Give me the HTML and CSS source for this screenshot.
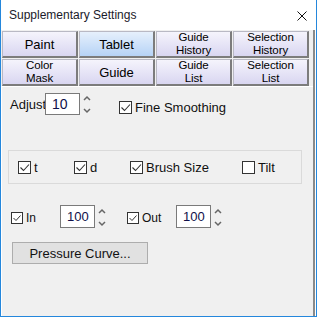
FILE: index.html
```html
<!DOCTYPE html>
<html lang="en">
<head>
    <meta charset="UTF-8">
    <title>Supplementary Settings</title>
    <link rel="stylesheet" href="styles.css">
</head>
<body>
    <div class="window">
        <div class="titlebar">
            <span class="title">Supplementary Settings</span>
            <svg class="close" width="10" height="10" viewBox="0 0 10 10">
                <path d="M0.5 0.5 L9.5 9.5 M9.5 0.5 L0.5 9.5" stroke="#111" stroke-width="1" fill="none"/>
            </svg>
        </div>
        <div class="frame">
            <div class="tabs">
                <div class="tab">Paint</div>
                <div class="tab active">Tablet</div>
                <div class="tab small"><span>Guide</span><span>History</span></div>
                <div class="tab small"><span>Selection</span><span>History</span></div>
                <div class="tab small"><span>Color</span><span>Mask</span></div>
                <div class="tab">Guide</div>
                <div class="tab small"><span>Guide</span><span>List</span></div>
                <div class="tab small"><span>Selection</span><span>List</span></div>
            </div>
            <div class="panel">
                <div class="row adjust-row">
                    <span class="label adjust">Adjust</span>
                    <div class="field">10</div>
                    <svg class="spin" width="8" height="22" viewBox="0 0 8 22">
                        <path d="M1 7 L4 4 L7 7 M1 16 L4 19 L7 16" stroke="#666" stroke-width="1.5" fill="none"/>
                    </svg>
                    <label class="check fine">
                        <span class="box">
                            <svg width="11" height="11" viewBox="0 0 11 11"><path d="M1.5 5.5 L4.5 8.5 L10 2.5" stroke="#333" stroke-width="1.1" fill="none"/></svg>
                        </span>
                        Fine Smoothing
                    </label>
                </div>

                <div class="group">
                    <label class="check g1">
                        <span class="box"><svg width="11" height="11" viewBox="0 0 11 11"><path d="M1.5 5.5 L4.5 8.5 L10 2.5" stroke="#333" stroke-width="1.1" fill="none"/></svg></span>
                        t
                    </label>
                    <label class="check g2">
                        <span class="box"><svg width="11" height="11" viewBox="0 0 11 11"><path d="M1.5 5.5 L4.5 8.5 L10 2.5" stroke="#333" stroke-width="1.1" fill="none"/></svg></span>
                        d
                    </label>
                    <label class="check g3">
                        <span class="box"><svg width="11" height="11" viewBox="0 0 11 11"><path d="M1.5 5.5 L4.5 8.5 L10 2.5" stroke="#333" stroke-width="1.1" fill="none"/></svg></span>
                        Brush Size
                    </label>
                    <label class="check">
                        <span class="box"></span>
                        Tilt
                    </label>
                </div>

                <div class="row pressure-row">
                    <label class="check small-check in">
                        <span class="box"><svg width="10" height="10" viewBox="0 0 10 10"><path d="M1.5 5 L4 7.5 L8.5 2.5" stroke="#333" stroke-width="1" fill="none"/></svg></span>
                        In
                    </label>
                    <div class="field tall">100</div>
                    <svg class="spin" width="8" height="22" viewBox="0 0 8 22">
                        <path d="M1 7 L4 4 L7 7 M1 16 L4 19 L7 16" stroke="#666" stroke-width="1.5" fill="none"/>
                    </svg>
                    <label class="check small-check out">
                        <span class="box"><svg width="10" height="10" viewBox="0 0 10 10"><path d="M1.5 5 L4 7.5 L8.5 2.5" stroke="#333" stroke-width="1" fill="none"/></svg></span>
                        Out
                    </label>
                    <div class="field tall">100</div>
                    <svg class="spin" width="8" height="22" viewBox="0 0 8 22">
                        <path d="M1 7 L4 4 L7 7 M1 16 L4 19 L7 16" stroke="#666" stroke-width="1.5" fill="none"/>
                    </svg>
                </div>

                <div class="button">Pressure Curve...</div>
            </div>
        </div>
    </div>
</body>
</html>
```

FILE: styles.css
```css
body {
    margin: 0;
    padding: 0;
    font-family: "Liberation Sans", Arial, sans-serif;
    color: #111;
}

.window {
    width: 317px;
    height: 317px;
    box-sizing: border-box;
    border: 1px solid #2487dc;
    border-top: 0;
    background: #ffffff;
    display: flex;
    flex-direction: column;
}

.titlebar {
    height: 30px;
    display: flex;
    align-items: center;
    justify-content: space-between;
    padding: 0 9px 0 8px;
    background: #ffffff;
}
.titlebar .title {
    font-size: 12px;
    color: #1a1a2a;
}
.titlebar .close {
    margin-top: 1px;
}

.frame {
    flex: 1;
    display: flex;
    flex-direction: column;
    background: #f0f0f0;
    border-right: 2px solid #8a8a8a;
    margin-right: 1px;
}

.tabs {
    display: grid;
    grid-template-columns: repeat(4, 76px);
    grid-auto-rows: 27px;
    gap: 1px;
    padding: 1px 4px 0 1px;
}
.tab {
    box-sizing: border-box;
    border-top: 1px solid #b9b9c4;
    border-left: 1px solid #b9b9c4;
    border-right: 2px solid #7c7c7c;
    border-bottom: 2px solid #7c7c7c;
    background: linear-gradient(#f5f4fc, #d9d6f1);
    display: flex;
    align-items: center;
    justify-content: center;
    text-align: center;
    font-size: 13px;
    color: #000;
}
.tab.small {
    flex-direction: column;
    font-size: 11.5px;
    line-height: 11px;
    gap: 2px;
    letter-spacing: -0.1px;
}
.tab.active {
    background: linear-gradient(#e6f0fc, #b6d3f6);
}

.panel {
    flex: 1;
    border-top: 1px solid #ffffff;
    border-left: 1px solid #ffffff;
    padding: 6px 0 0 0;
    font-size: 13px;
}

.row {
    display: flex;
    align-items: center;
}

.adjust-row {
    height: 22px;
    padding-left: 8px;
}
.label.adjust {
    width: 35px;
    white-space: nowrap;
}

.field {
    box-sizing: border-box;
    width: 35px;
    height: 22px;
    border: 1px solid #7a7a7a;
    background: #ffffff;
    padding-left: 6px;
    display: flex;
    align-items: center;
    font-size: 14px;
    color: #10104a;
}
.field.tall {
    height: 23px;
    font-size: 13px;
}

.spin {
    margin-left: 3px;
}

.check {
    display: flex;
    align-items: center;
    gap: 3px;
    white-space: nowrap;
}
.check .box {
    box-sizing: border-box;
    width: 13px;
    height: 13px;
    border: 1px solid #333;
    background: #ffffff;
    display: flex;
    align-items: center;
    justify-content: center;
}
.check.fine {
    margin-left: 28px;
    margin-top: 6px;
}

.group {
    box-sizing: border-box;
    margin: 35px 0 0 6px;
    width: 294px;
    height: 34px;
    border: 1px solid #dadada;
    display: flex;
    align-items: center;
    padding-left: 9px;
}
.group .g1,
.group .g2 {
    width: 56px;
}
.group .g3 {
    width: 112px;
}

.pressure-row {
    margin-top: 21px;
    height: 23px;
    padding-left: 9px;
}
.small-check {
    font-size: 12px;
}
.small-check .box {
    width: 12px;
    height: 12px;
}
.small-check.in {
    width: 49px;
    margin-top: 3px;
}
.small-check.out {
    width: 49px;
    margin-left: 21px;
    margin-top: 3px;
}

.button {
    box-sizing: border-box;
    margin: 14px 0 0 10px;
    width: 136px;
    height: 22px;
    border: 1px solid #adadad;
    background: #e1e1e1;
    display: flex;
    align-items: center;
    justify-content: center;
    font-size: 13px;
}
```
